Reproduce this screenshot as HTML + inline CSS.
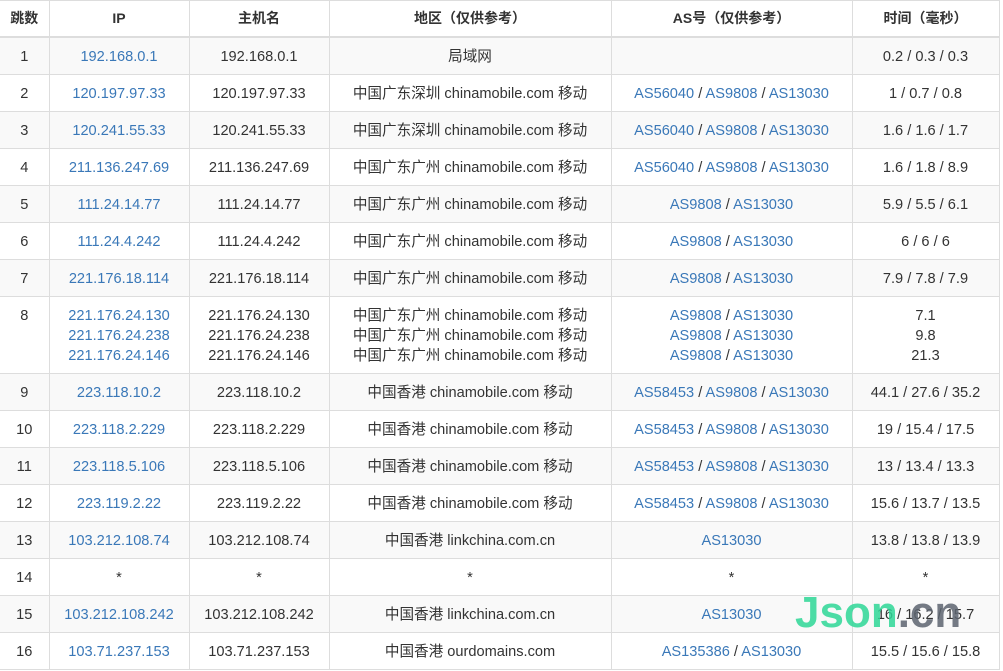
<!DOCTYPE html>
<html><head><meta charset="utf-8"><style>
body{margin:0;background:#fff;font-family:"Liberation Sans","Noto Sans CJK SC",sans-serif;font-size:14.6px;color:#333;}
table{border-collapse:collapse;width:999px;table-layout:fixed;}
th,td{border:1px solid #ddd;text-align:center;padding:9px 0 7px;line-height:20px;height:20px;white-space:nowrap;overflow:hidden}
th{font-weight:bold;border-bottom:2px solid #ddd;padding:7px 0 8px;font-size:14px}
tr:nth-child(odd) td{background:#f9f9f9}
a{color:#3a78b8;text-decoration:none}
th:first-child,td:first-child{border-left:none}
.wm{position:absolute;left:795px;top:588px;font:bold 44px "Liberation Sans",sans-serif;opacity:.85}
.wm .g{color:#2fd797}.wm .c{color:#5d6570}
</style></head><body>
<table>
<colgroup><col style="width:49px"><col style="width:140px"><col style="width:140px"><col style="width:282px"><col style="width:241px"><col style="width:147px"></colgroup>
<thead><tr><th>跳数</th><th>IP</th><th>主机名</th><th>地区（仅供参考）</th><th>AS号（仅供参考）</th><th>时间（毫秒）</th></tr></thead>
<tbody>
<tr><td>1</td><td><a>192.168.0.1</a></td><td>192.168.0.1</td><td>局域网</td><td></td><td>0.2 / 0.3 / 0.3</td></tr>
<tr><td>2</td><td><a>120.197.97.33</a></td><td>120.197.97.33</td><td>中国广东深圳 chinamobile.com 移动</td><td><a>AS56040</a> / <a>AS9808</a> / <a>AS13030</a></td><td>1 / 0.7 / 0.8</td></tr>
<tr><td>3</td><td><a>120.241.55.33</a></td><td>120.241.55.33</td><td>中国广东深圳 chinamobile.com 移动</td><td><a>AS56040</a> / <a>AS9808</a> / <a>AS13030</a></td><td>1.6 / 1.6 / 1.7</td></tr>
<tr><td>4</td><td><a>211.136.247.69</a></td><td>211.136.247.69</td><td>中国广东广州 chinamobile.com 移动</td><td><a>AS56040</a> / <a>AS9808</a> / <a>AS13030</a></td><td>1.6 / 1.8 / 8.9</td></tr>
<tr><td>5</td><td><a>111.24.14.77</a></td><td>111.24.14.77</td><td>中国广东广州 chinamobile.com 移动</td><td><a>AS9808</a> / <a>AS13030</a></td><td>5.9 / 5.5 / 6.1</td></tr>
<tr><td>6</td><td><a>111.24.4.242</a></td><td>111.24.4.242</td><td>中国广东广州 chinamobile.com 移动</td><td><a>AS9808</a> / <a>AS13030</a></td><td>6 / 6 / 6</td></tr>
<tr><td>7</td><td><a>221.176.18.114</a></td><td>221.176.18.114</td><td>中国广东广州 chinamobile.com 移动</td><td><a>AS9808</a> / <a>AS13030</a></td><td>7.9 / 7.8 / 7.9</td></tr>
<tr><td style="vertical-align:top;height:60px">8</td><td><a>221.176.24.130</a><br><a>221.176.24.238</a><br><a>221.176.24.146</a></td><td>221.176.24.130<br>221.176.24.238<br>221.176.24.146</td><td>中国广东广州 chinamobile.com 移动<br>中国广东广州 chinamobile.com 移动<br>中国广东广州 chinamobile.com 移动</td><td><a>AS9808</a> / <a>AS13030</a><br><a>AS9808</a> / <a>AS13030</a><br><a>AS9808</a> / <a>AS13030</a></td><td>7.1<br>9.8<br>21.3</td></tr>
<tr><td>9</td><td><a>223.118.10.2</a></td><td>223.118.10.2</td><td>中国香港 chinamobile.com 移动</td><td><a>AS58453</a> / <a>AS9808</a> / <a>AS13030</a></td><td>44.1 / 27.6 / 35.2</td></tr>
<tr><td>10</td><td><a>223.118.2.229</a></td><td>223.118.2.229</td><td>中国香港 chinamobile.com 移动</td><td><a>AS58453</a> / <a>AS9808</a> / <a>AS13030</a></td><td>19 / 15.4 / 17.5</td></tr>
<tr><td>11</td><td><a>223.118.5.106</a></td><td>223.118.5.106</td><td>中国香港 chinamobile.com 移动</td><td><a>AS58453</a> / <a>AS9808</a> / <a>AS13030</a></td><td>13 / 13.4 / 13.3</td></tr>
<tr><td>12</td><td><a>223.119.2.22</a></td><td>223.119.2.22</td><td>中国香港 chinamobile.com 移动</td><td><a>AS58453</a> / <a>AS9808</a> / <a>AS13030</a></td><td>15.6 / 13.7 / 13.5</td></tr>
<tr><td>13</td><td><a>103.212.108.74</a></td><td>103.212.108.74</td><td>中国香港 linkchina.com.cn</td><td><a>AS13030</a></td><td>13.8 / 13.8 / 13.9</td></tr>
<tr><td>14</td><td>*</td><td>*</td><td>*</td><td>*</td><td>*</td></tr>
<tr><td>15</td><td><a>103.212.108.242</a></td><td>103.212.108.242</td><td>中国香港 linkchina.com.cn</td><td><a>AS13030</a></td><td>16 / 16.2 / 15.7</td></tr>
<tr><td>16</td><td><a>103.71.237.153</a></td><td>103.71.237.153</td><td>中国香港 ourdomains.com</td><td><a>AS135386</a> / <a>AS13030</a></td><td>15.5 / 15.6 / 15.8</td></tr>
</tbody></table>
<div class="wm"><span class="g">Json</span><span class="c">.cn</span></div>
</body></html>
